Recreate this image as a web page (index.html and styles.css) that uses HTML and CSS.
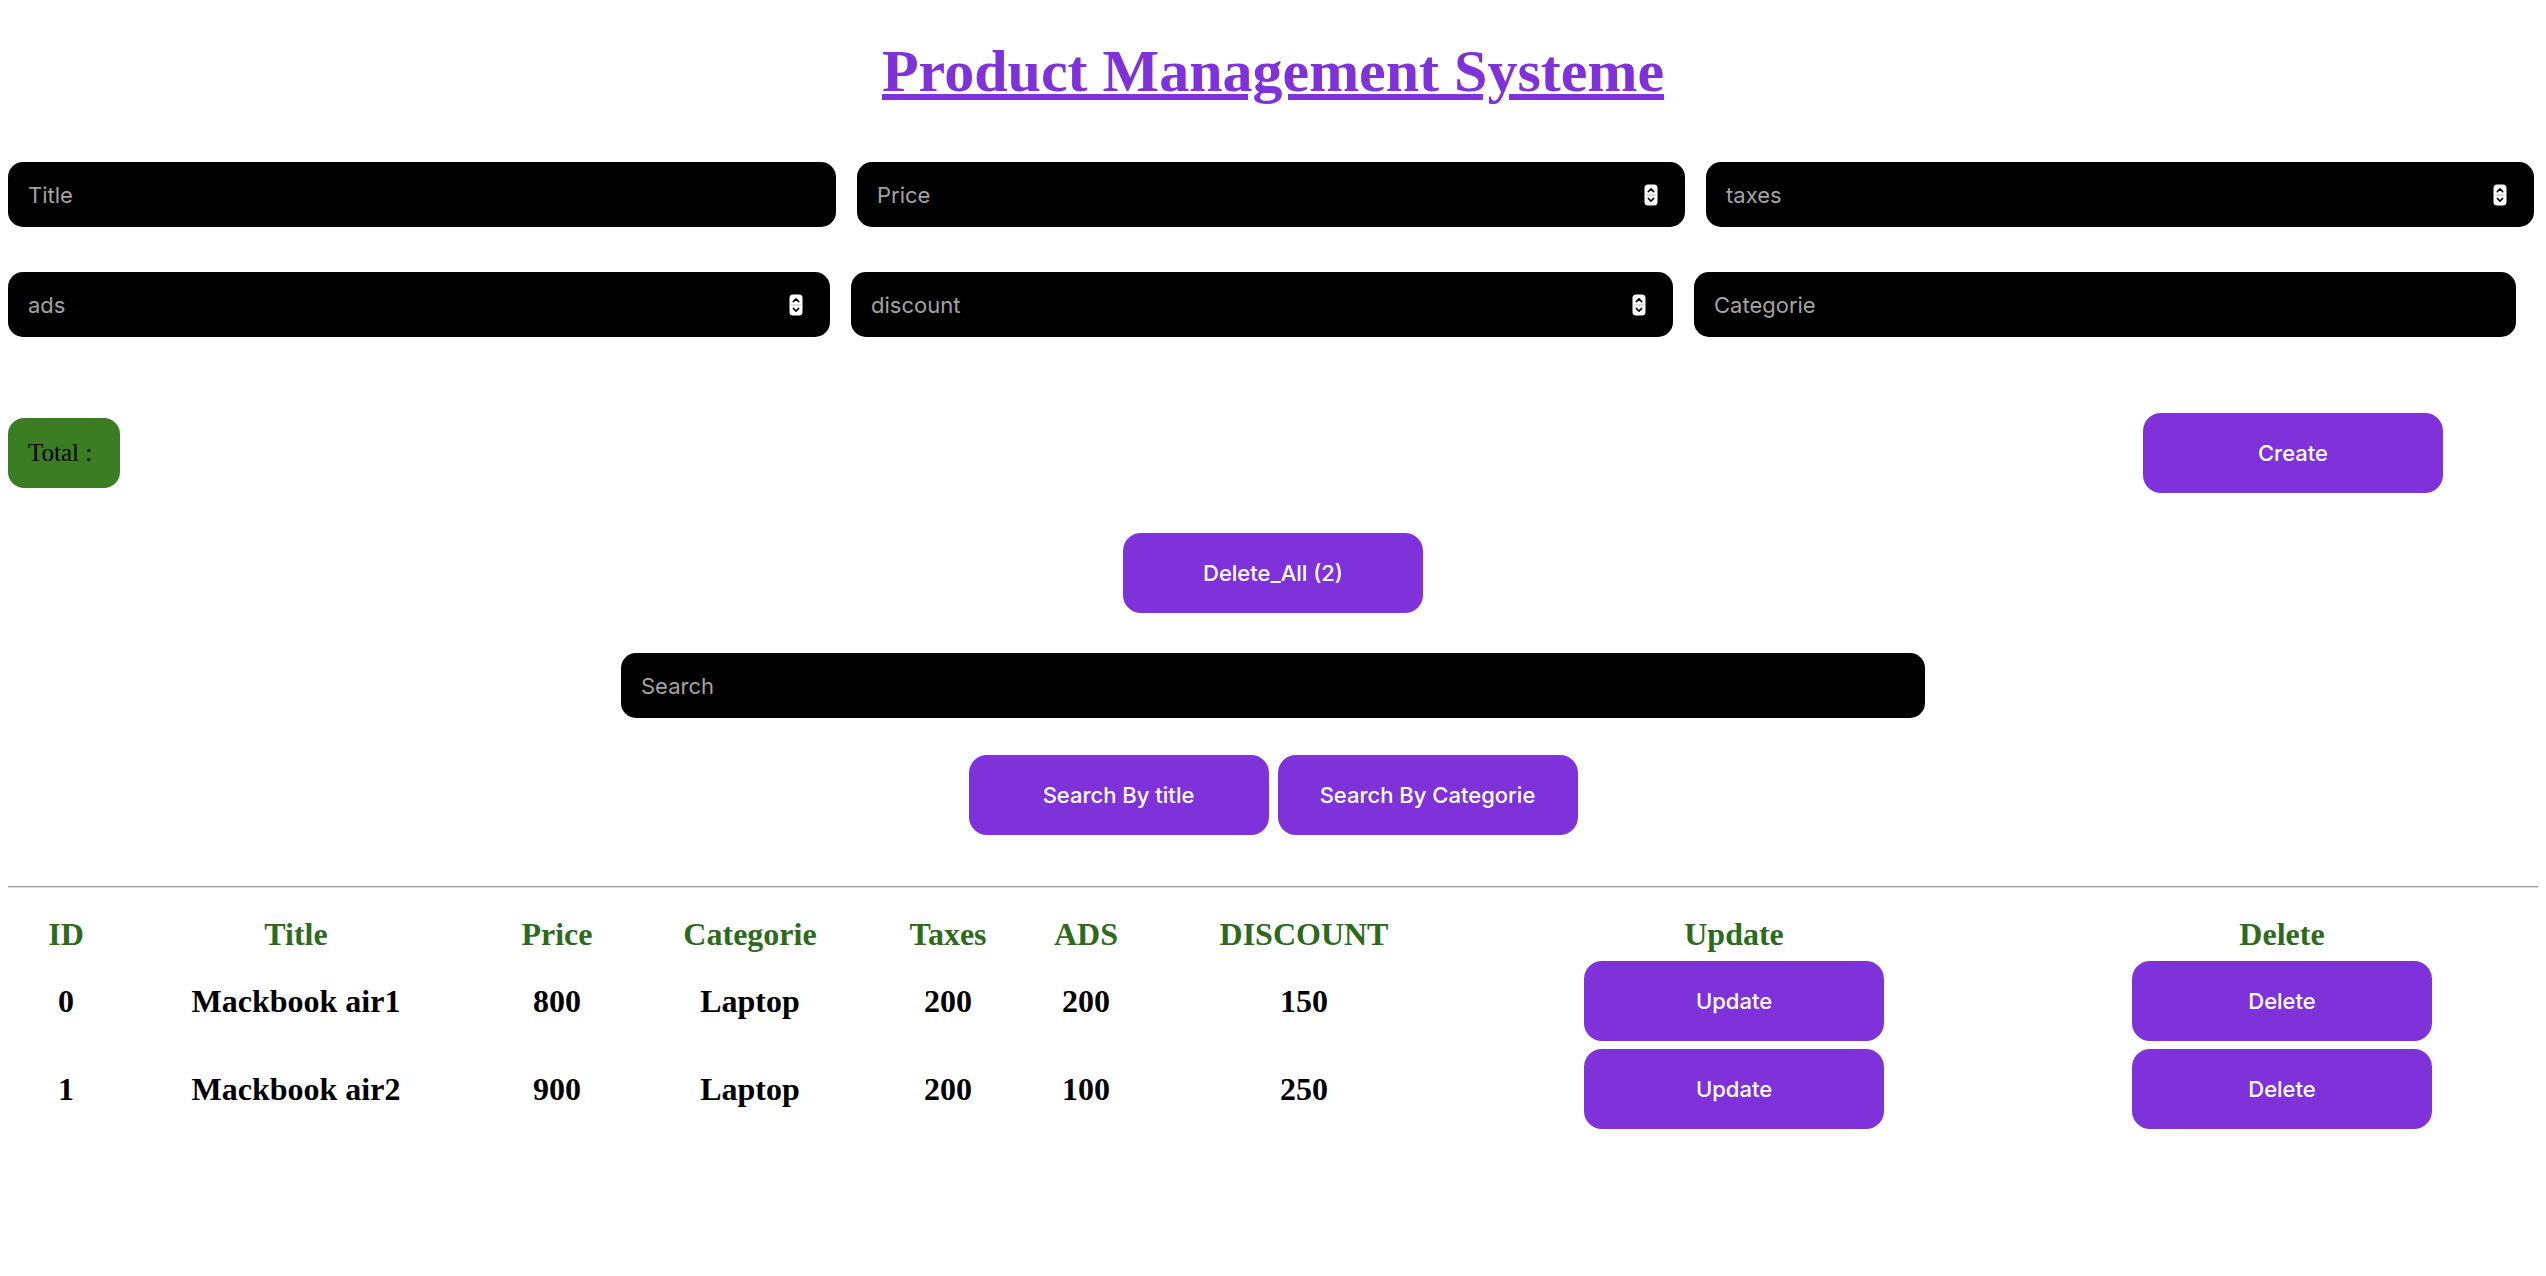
FILE: index.html
```html
<!DOCTYPE html>
<html lang="en">
<head>
<meta charset="utf-8">
<title>Product Management Systeme</title>
<link rel="stylesheet" href="styles.css">
</head>
<body>
<h1 class="page-title">Product Management Systeme</h1>

<div class="row row-top">
  <span class="field"><input class="inp" type="text" placeholder="Title"></span>
  <span class="field"><input class="inp" type="text" placeholder="Price"><span class="stepper"><svg width="14" height="22" viewBox="0 0 14 22"><rect x="0.5" y="0.5" width="13" height="21" rx="3.5" fill="#fff"/><path d="M4.3 7.6 L7 4.9 L9.7 7.6" fill="none" stroke="#000" stroke-width="1.5" stroke-linecap="round" stroke-linejoin="round"/><line x1="2" y1="11" x2="12" y2="11" stroke="#bdbdbd" stroke-width="1"/><path d="M4.3 14.4 L7 17.1 L9.7 14.4" fill="none" stroke="#000" stroke-width="1.5" stroke-linecap="round" stroke-linejoin="round"/></svg></span></span>
  <span class="field"><input class="inp" type="text" placeholder="taxes"><span class="stepper"><svg width="14" height="22" viewBox="0 0 14 22"><rect x="0.5" y="0.5" width="13" height="21" rx="3.5" fill="#fff"/><path d="M4.3 7.6 L7 4.9 L9.7 7.6" fill="none" stroke="#000" stroke-width="1.5" stroke-linecap="round" stroke-linejoin="round"/><line x1="2" y1="11" x2="12" y2="11" stroke="#bdbdbd" stroke-width="1"/><path d="M4.3 14.4 L7 17.1 L9.7 14.4" fill="none" stroke="#000" stroke-width="1.5" stroke-linecap="round" stroke-linejoin="round"/></svg></span></span>
</div>

<div class="row row-bottom">
  <span class="field"><input class="inp" type="text" placeholder="ads"><span class="stepper"><svg width="14" height="22" viewBox="0 0 14 22"><rect x="0.5" y="0.5" width="13" height="21" rx="3.5" fill="#fff"/><path d="M4.3 7.6 L7 4.9 L9.7 7.6" fill="none" stroke="#000" stroke-width="1.5" stroke-linecap="round" stroke-linejoin="round"/><line x1="2" y1="11" x2="12" y2="11" stroke="#bdbdbd" stroke-width="1"/><path d="M4.3 14.4 L7 17.1 L9.7 14.4" fill="none" stroke="#000" stroke-width="1.5" stroke-linecap="round" stroke-linejoin="round"/></svg></span></span>
  <span class="field"><input class="inp" type="text" placeholder="discount"><span class="stepper"><svg width="14" height="22" viewBox="0 0 14 22"><rect x="0.5" y="0.5" width="13" height="21" rx="3.5" fill="#fff"/><path d="M4.3 7.6 L7 4.9 L9.7 7.6" fill="none" stroke="#000" stroke-width="1.5" stroke-linecap="round" stroke-linejoin="round"/><line x1="2" y1="11" x2="12" y2="11" stroke="#bdbdbd" stroke-width="1"/><path d="M4.3 14.4 L7 17.1 L9.7 14.4" fill="none" stroke="#000" stroke-width="1.5" stroke-linecap="round" stroke-linejoin="round"/></svg></span></span>
  <span class="field"><input class="inp" type="text" placeholder="Categorie"></span>
</div>

<div class="actions">
  <div class="total">Total :</div>
  <button class="btn create">Create</button>
</div>

<div class="center-row delete-row">
  <button class="btn">Delete_All (2)</button>
</div>

<div class="center-row search-row">
  <input class="inp search" type="text" placeholder="Search">
</div>

<div class="center-row search-btns">
  <button class="btn">Search By title</button>
  <button class="btn">Search By Categorie</button>
</div>

<hr class="divider">

<table class="products">
  <colgroup>
    <col class="c-id"><col class="c-title"><col class="c-price"><col class="c-cat"><col class="c-tax"><col class="c-ads"><col class="c-disc"><col class="c-upd"><col>
  </colgroup>
  <thead>
    <tr><th>ID</th><th>Title</th><th>Price</th><th>Categorie</th><th>Taxes</th><th>ADS</th><th>DISCOUNT</th><th>Update</th><th class="last">Delete</th></tr>
  </thead>
  <tbody>
    <tr><td>0</td><td>Mackbook air1</td><td>800</td><td>Laptop</td><td>200</td><td>200</td><td>150</td><td><button class="btn cell-btn">Update</button></td><td class="last"><button class="btn cell-btn">Delete</button></td></tr>
    <tr><td>1</td><td>Mackbook air2</td><td>900</td><td>Laptop</td><td>200</td><td>100</td><td>250</td><td><button class="btn cell-btn">Update</button></td><td class="last"><button class="btn cell-btn">Delete</button></td></tr>
  </tbody>
</table>
</body>
</html>
```

FILE: styles.css
```css
body {
  margin: 8px;
  background: #ffffff;
  font-family: "Liberation Serif", "Times New Roman", serif;
  color: #000;
}

.page-title {
  margin: 30px 0 0;
  font-size: 60px;
  line-height: 66px;
  font-weight: bold;
  text-align: center;
  color: #7f32d9;
  text-decoration: underline;
}

.row {
  display: flex;
  gap: 21px;
}

.row-top {
  margin-top: 58px;
}

.row-bottom {
  margin-top: 45px;
}

.field {
  position: relative;
  display: block;
}

.row-top .field {
  width: 828px;
}

.row-bottom .field {
  width: 822px;
}

.inp {
  box-sizing: border-box;
  display: block;
  width: 100%;
  height: 65px;
  padding: 0 20px;
  background: #000;
  border: none;
  border-radius: 15px;
  outline: none;
  color: #fff;
  font-family: Inter, "Noto Sans", sans-serif;
  font-size: 22px;
}

.inp::placeholder {
  color: #a3a3a3;
}

.stepper {
  position: absolute;
  right: 27px;
  top: 50%;
  transform: translateY(-50%);
  display: block;
  height: 22px;
}

.stepper svg {
  display: block;
}

.actions {
  display: flex;
  justify-content: space-between;
  align-items: center;
  margin-top: 76px;
}

.total {
  display: flex;
  align-items: center;
  height: 70px;
  padding: 0 28px 0 20px;
  background: #3a7d22;
  border-radius: 16px;
  font-size: 25px;
  color: #000;
}

.btn {
  width: 300px;
  height: 80px;
  padding: 0;
  background: #7f32d9;
  color: #fff;
  border: none;
  border-radius: 18px;
  font-family: Inter, "Noto Sans", sans-serif;
  font-size: 22px;
  font-weight: 500;
  cursor: pointer;
}

.create {
  margin-right: 95px;
}

.center-row {
  display: flex;
  justify-content: center;
}

.delete-row {
  margin-top: 40px;
}

.search-row {
  margin-top: 40px;
}

.search {
  width: 1304px;
}

.search-btns {
  margin-top: 37px;
  gap: 9px;
}

.divider {
  margin: 51px 0 0;
  height: 0;
  border: none;
  border-top: 1px solid #9a9a9a;
  border-bottom: 1px solid #dedede;
}

.products {
  width: 100%;
  margin-top: 24px;
  border-collapse: collapse;
  table-layout: fixed;
}

.c-id { width: 116px; }
.c-title { width: 344px; }
.c-price { width: 178px; }
.c-cat { width: 208px; }
.c-tax { width: 188px; }
.c-ads { width: 88px; }
.c-disc { width: 348px; }
.c-upd { width: 512px; }

.products th,
.products td {
  padding: 4px 0;
  text-align: center;
  vertical-align: middle;
  font-size: 32px;
  font-weight: bold;
}

.products th {
  color: #2d6a1b;
}

.products .last {
  padding-left: 36px;
}

.cell-btn {
  display: block;
  margin: 0 auto;
}
```
